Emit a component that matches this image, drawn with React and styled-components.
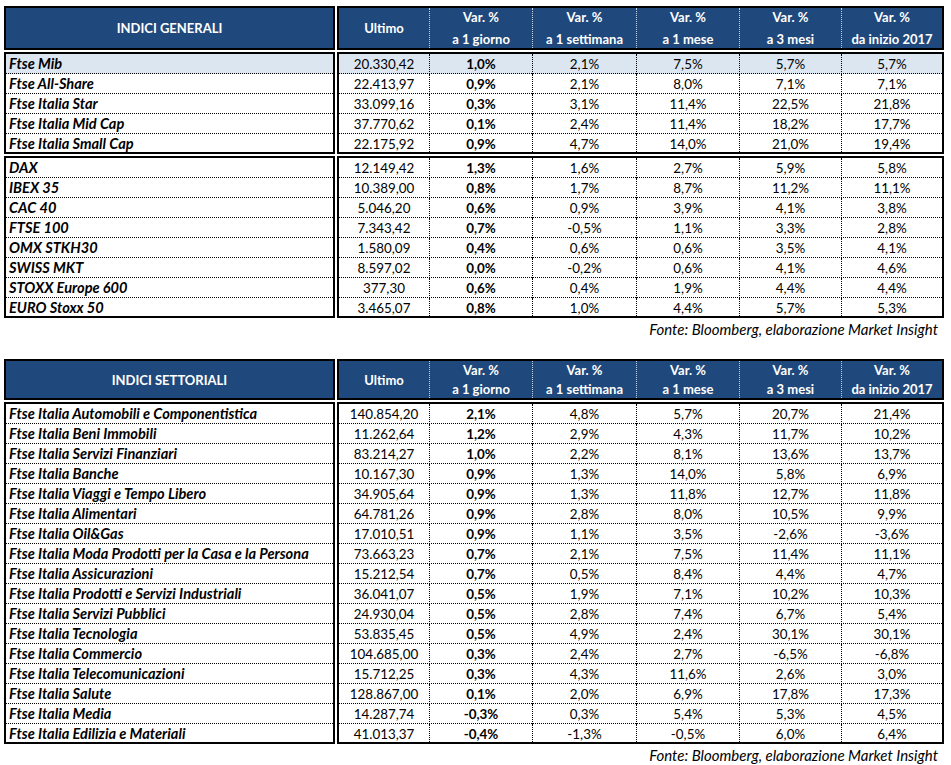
import React from 'react';
import styled, { createGlobalStyle } from 'styled-components';

const GlobalStyle = createGlobalStyle`
  body {
    margin: 0;
    background: #fff;
    font-family: Lato, "Open Sans", sans-serif;
    color: #000;
  }
`;

const Page = styled.div`
  padding: 6px 0 0 4px;
  width: 940px;
`;

const Block = styled.div`
  display: grid;
  grid-template-columns: 331px 607px;
  gap: 2px;
`;

const HeadBox = styled.div`
  box-sizing: border-box;
  height: ${p => p.$h}px;
  background: #1f497d;
  border: 2px solid #000;
  color: #fff;
  font-weight: 700;
  font-size: 13px;
`;

const HeadTitle = styled(HeadBox)`
  display: flex;
  align-items: center;
  justify-content: center;
`;

const HeadCols = styled(HeadBox)`
  display: grid;
  grid-template-columns: 91px 103px 104px 103px 102px 1fr;
`;

const HeadCell = styled.div`
  display: flex;
  flex-direction: column;
  align-items: center;
  justify-content: ${p => (p.$single ? 'center' : 'space-between')};
  line-height: 18px;
  border-right: 1px dotted #c8d2e0;
  &:last-child {
    border-right: none;
  }
`;

const Group = styled.div`
  box-sizing: border-box;
  border: 2px solid #000;
`;

const Row = styled.div`
  box-sizing: border-box;
  height: 20px;
  background: ${p => (p.$hl ? '#dce6f1' : '#fff')};
  border-bottom: 1px dotted #000;
  &:last-child {
    height: 18px;
    border-bottom: none;
  }
`;

const NameRow = styled(Row)`
  padding-left: 3px;
  font-size: 14.6px;
  font-weight: 700;
  font-style: italic;
  line-height: 20px;
  white-space: nowrap;
`;

const ValueRow = styled(Row)`
  display: grid;
  grid-template-columns: 91px 103px 104px 103px 102px 1fr;
`;

const Cell = styled.div`
  box-sizing: border-box;
  text-align: center;
  font-size: 13.4px;
  line-height: 20px;
  font-weight: ${p => (p.$bold ? 700 : 400)};
  border-right: 1px dotted #000;
  &:last-child {
    border-right: none;
  }
`;

const Source = styled.div`
  box-sizing: border-box;
  width: 939px;
  padding-right: 5px;
  text-align: right;
  font-style: italic;
  font-size: 15px;
  line-height: 18px;
  margin: 2px 0 ${p => p.$after}px;
`;

const cols = [
  ['Ultimo'],
  ['Var. %', 'a 1 giorno'],
  ['Var. %', 'a 1 settimana'],
  ['Var. %', 'a 1 mese'],
  ['Var. %', 'a 3 mesi'],
  ['Var. %', 'da inizio 2017'],
];

const generali = [
  [
    ['Ftse Mib', '20.330,42', '1,0%', '2,1%', '7,5%', '5,7%', '5,7%', true],
    ['Ftse All-Share', '22.413,97', '0,9%', '2,1%', '8,0%', '7,1%', '7,1%'],
    ['Ftse Italia Star', '33.099,16', '0,3%', '3,1%', '11,4%', '22,5%', '21,8%'],
    ['Ftse Italia Mid Cap', '37.770,62', '0,1%', '2,4%', '11,4%', '18,2%', '17,7%'],
    ['Ftse Italia Small Cap', '22.175,92', '0,9%', '4,7%', '14,0%', '21,0%', '19,4%'],
  ],
  [
    ['DAX', '12.149,42', '1,3%', '1,6%', '2,7%', '5,9%', '5,8%'],
    ['IBEX 35', '10.389,00', '0,8%', '1,7%', '8,7%', '11,2%', '11,1%'],
    ['CAC 40', '5.046,20', '0,6%', '0,9%', '3,9%', '4,1%', '3,8%'],
    ['FTSE 100', '7.343,42', '0,7%', '-0,5%', '1,1%', '3,3%', '2,8%'],
    ['OMX STKH30', '1.580,09', '0,4%', '0,6%', '0,6%', '3,5%', '4,1%'],
    ['SWISS MKT', '8.597,02', '0,0%', '-0,2%', '0,6%', '4,1%', '4,6%'],
    ['STOXX Europe 600', '377,30', '0,6%', '0,4%', '1,9%', '4,4%', '4,4%'],
    ['EURO Stoxx 50', '3.465,07', '0,8%', '1,0%', '4,4%', '5,7%', '5,3%'],
  ],
];

const settoriali = [
  [
    ['Automobili e Componentistica', '140.854,20', '2,1%', '4,8%', '5,7%', '20,7%', '21,4%'],
    ['Beni Immobili', '11.262,64', '1,2%', '2,9%', '4,3%', '11,7%', '10,2%'],
    ['Servizi Finanziari', '83.214,27', '1,0%', '2,2%', '8,1%', '13,6%', '13,7%'],
    ['Banche', '10.167,30', '0,9%', '1,3%', '14,0%', '5,8%', '6,9%'],
    ['Viaggi e Tempo Libero', '34.905,64', '0,9%', '1,3%', '11,8%', '12,7%', '11,8%'],
    ['Alimentari', '64.781,26', '0,9%', '2,8%', '8,0%', '10,5%', '9,9%'],
    ['Oil&Gas', '17.010,51', '0,9%', '1,1%', '3,5%', '-2,6%', '-3,6%'],
    ['Moda Prodotti per la Casa e la Persona', '73.663,23', '0,7%', '2,1%', '7,5%', '11,4%', '11,1%'],
    ['Assicurazioni', '15.212,54', '0,7%', '0,5%', '8,4%', '4,4%', '4,7%'],
    ['Prodotti e Servizi Industriali', '36.041,07', '0,5%', '1,9%', '7,1%', '10,2%', '10,3%'],
    ['Servizi Pubblici', '24.930,04', '0,5%', '2,8%', '7,4%', '6,7%', '5,4%'],
    ['Tecnologia', '53.835,45', '0,5%', '4,9%', '2,4%', '30,1%', '30,1%'],
    ['Commercio', '104.685,00', '0,3%', '2,4%', '2,7%', '-6,5%', '-6,8%'],
    ['Telecomunicazioni', '15.712,25', '0,3%', '4,3%', '11,6%', '2,6%', '3,0%'],
    ['Salute', '128.867,00', '0,1%', '2,0%', '6,9%', '17,8%', '17,3%'],
    ['Media', '14.287,74', '-0,3%', '0,3%', '5,4%', '5,3%', '4,5%'],
    ['Edilizia e Materiali', '41.013,37', '-0,4%', '-1,3%', '-0,5%', '6,0%', '6,4%'],
  ].map(([n, ...rest]) => ['Ftse Italia ' + n, ...rest]),
];

function IndexTable({ title, headH, groups }) {
  return (
    <Block>
      <HeadTitle $h={headH}>{title}</HeadTitle>
      <HeadCols $h={headH}>
        {cols.map((c, i) => (
          <HeadCell key={i} $single={c.length === 1}>
            {c.map(t => (
              <span key={t}>{t}</span>
            ))}
          </HeadCell>
        ))}
      </HeadCols>
      {groups.map((g, gi) => (
        <React.Fragment key={gi}>
          <Group>
            {g.map(r => (
              <NameRow key={r[0]} $hl={r[7]}>
                {r[0]}
              </NameRow>
            ))}
          </Group>
          <Group>
            {g.map(r => (
              <ValueRow key={r[0]} $hl={r[7]}>
                {r.slice(1, 7).map((v, i) => (
                  <Cell key={i} $bold={i === 1}>
                    {v}
                  </Cell>
                ))}
              </ValueRow>
            ))}
          </Group>
        </React.Fragment>
      ))}
    </Block>
  );
}

export default function App() {
  return (
    <Page>
      <GlobalStyle />
      <IndexTable title="INDICI GENERALI" headH={44} groups={generali} />
      <Source $after={21}>Fonte: Bloomberg, elaborazione Market Insight</Source>
      <IndexTable title="INDICI SETTORIALI" headH={41} groups={settoriali} />
      <Source $after={0}>Fonte: Bloomberg, elaborazione Market Insight</Source>
    </Page>
  );
}
